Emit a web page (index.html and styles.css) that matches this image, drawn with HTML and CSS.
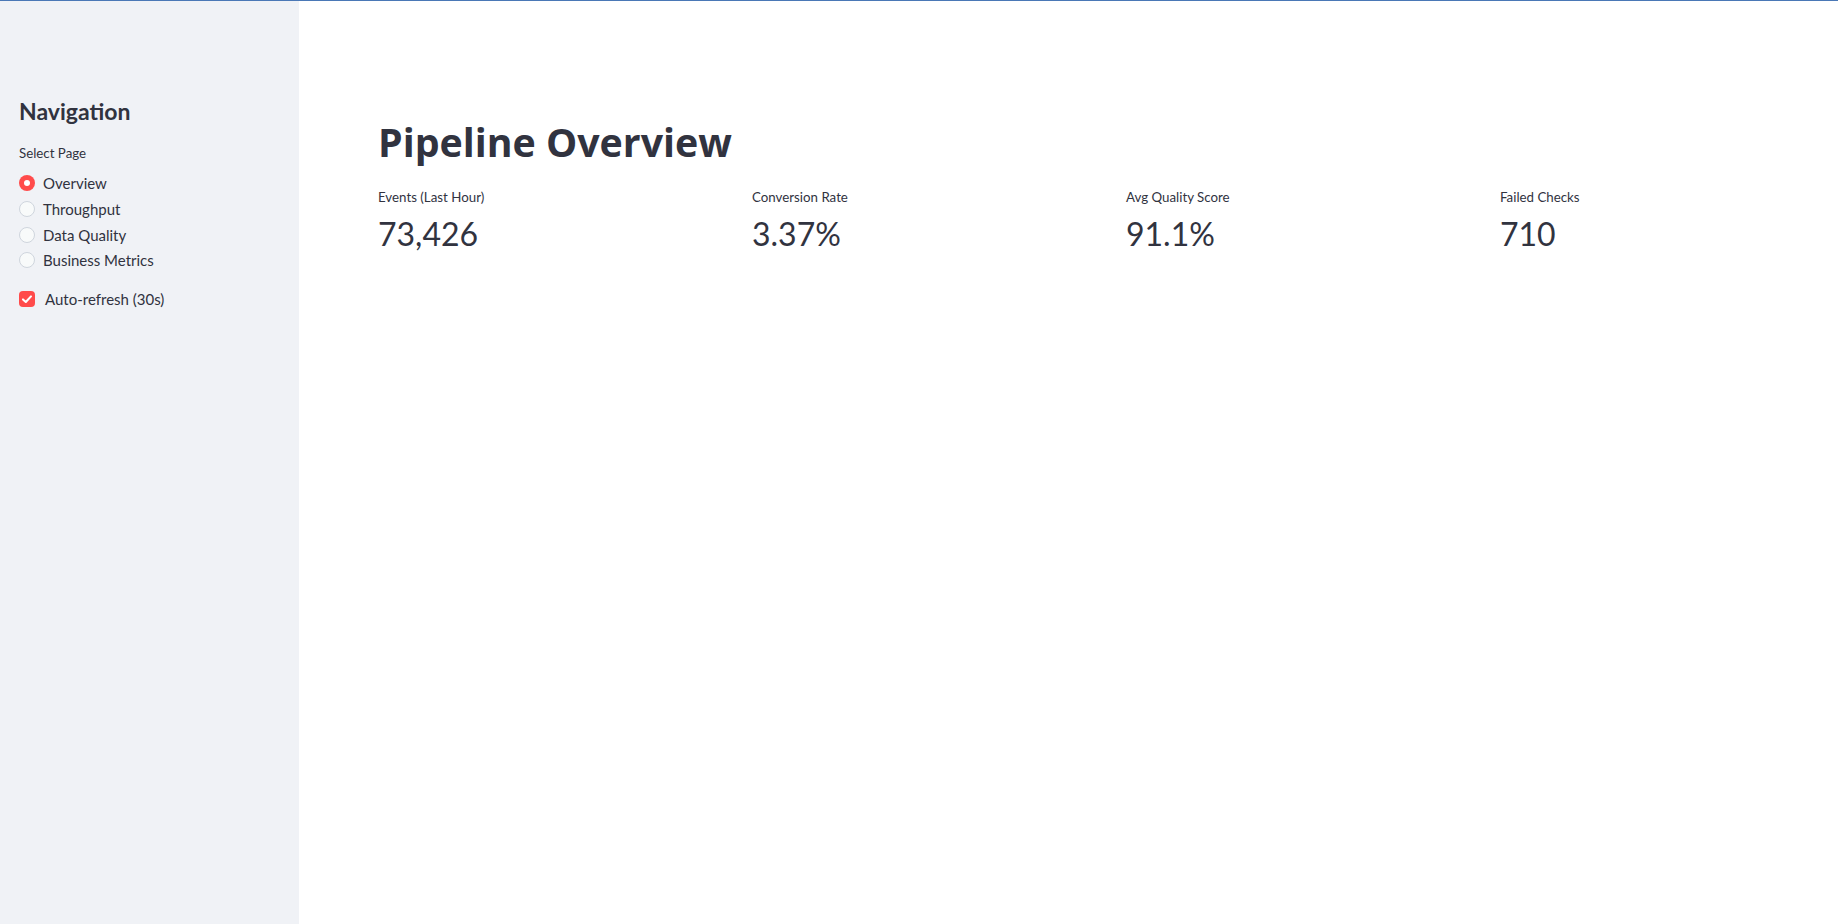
FILE: index.html
```html
<!DOCTYPE html>
<html lang="en">
<head>
<meta charset="utf-8">
<title>Pipeline Overview</title>
<link rel="stylesheet" href="styles.css">
</head>
<body>
<div class="app">
  <aside class="sidebar">
    <h2 class="nav-title">Navigation</h2>
    <div class="widget-label">Select Page</div>
    <div class="radio-group">
      <label class="radio-row"><span class="radio radio-on"></span><span class="radio-text">Overview</span></label>
      <label class="radio-row"><span class="radio"></span><span class="radio-text">Throughput</span></label>
      <label class="radio-row"><span class="radio"></span><span class="radio-text">Data Quality</span></label>
      <label class="radio-row"><span class="radio"></span><span class="radio-text">Business Metrics</span></label>
    </div>
    <label class="check-row">
      <span class="checkbox">
        <svg viewBox="0 0 16 16" width="16" height="16"><path d="M4 8.4 L6.8 11 L12 5.4" fill="none" stroke="#fff" stroke-width="2.1" stroke-linecap="round" stroke-linejoin="round"/></svg>
      </span>
      <span class="check-text">Auto-refresh (30s)</span>
    </label>
  </aside>
  <main class="main">
    <h1 class="page-title">Pipeline Overview</h1>
    <div class="metrics">
      <div class="metric"><div class="metric-label">Events (Last Hour)</div><div class="metric-value">73,426</div></div>
      <div class="metric"><div class="metric-label">Conversion Rate</div><div class="metric-value">3.37%</div></div>
      <div class="metric"><div class="metric-label">Avg Quality Score</div><div class="metric-value">91.1%</div></div>
      <div class="metric"><div class="metric-label">Failed Checks</div><div class="metric-value">710</div></div>
    </div>
  </main>
</div>
</body>
</html>
```
FILE: styles.css
```css
html, body {
  margin: 0;
  padding: 0;
  height: 100%;
  overflow: hidden;
  background: #ffffff;
}
body {
  font-family: Lato, "Source Sans Pro", "Noto Sans", sans-serif;
  color: #31333f;
  border-top: 1px solid #4a78b6;
  box-sizing: border-box;
}
.app {
  display: flex;
  height: 100%;
}
.sidebar {
  width: 299px;
  flex: 0 0 299px;
  background: #f0f2f6;
  padding: 94px 0 0 19px;
  box-sizing: border-box;
}
.nav-title {
  margin: 0;
  font-size: 23px;
  line-height: 32px;
  font-weight: 700;
}
.widget-label {
  margin-top: 15.5px;
  font-size: 13.3px;
  line-height: 20px;
}
.radio-group {
  margin-top: 8px;
  display: flex;
  flex-direction: column;
}
.radio-row {
  display: flex;
  align-items: center;
  gap: 8px;
  height: 25.7px;
}
.radio {
  width: 16px;
  height: 16px;
  border-radius: 50%;
  box-sizing: border-box;
  border: 1px solid #cfd5dd;
  background: #f8fafa;
  position: relative;
}
.radio-on {
  border: none;
  background: #ff4b4b;
}
.radio-on::after {
  content: "";
  position: absolute;
  left: 5px;
  top: 5px;
  width: 6px;
  height: 6px;
  border-radius: 50%;
  background: #ffffff;
}
.radio-text, .check-text {
  font-size: 15px;
  line-height: 26px;
}
.check-row {
  margin-top: 13.5px;
  display: flex;
  align-items: center;
  gap: 10px;
  height: 24px;
}
.checkbox {
  width: 16px;
  height: 16px;
  border-radius: 4px;
  background: #ff4b4b;
  display: flex;
}
.main {
  flex: 1;
  padding: 116.5px 0 0 79px;
  min-width: 0;
}
.page-title {
  margin: 0;
  font-family: "Open Sans", Lato, sans-serif;
  font-size: 39.3px;
  line-height: 48px;
  font-weight: 700;
}
.metrics {
  margin-top: 21px;
  display: grid;
  grid-template-columns: repeat(4, 358px);
  column-gap: 16px;
}
.metric-label {
  font-size: 13.3px;
  line-height: 20px;
}
.metric-value {
  margin-top: 7px;
  font-size: 32px;
  line-height: 40px;
}
```
